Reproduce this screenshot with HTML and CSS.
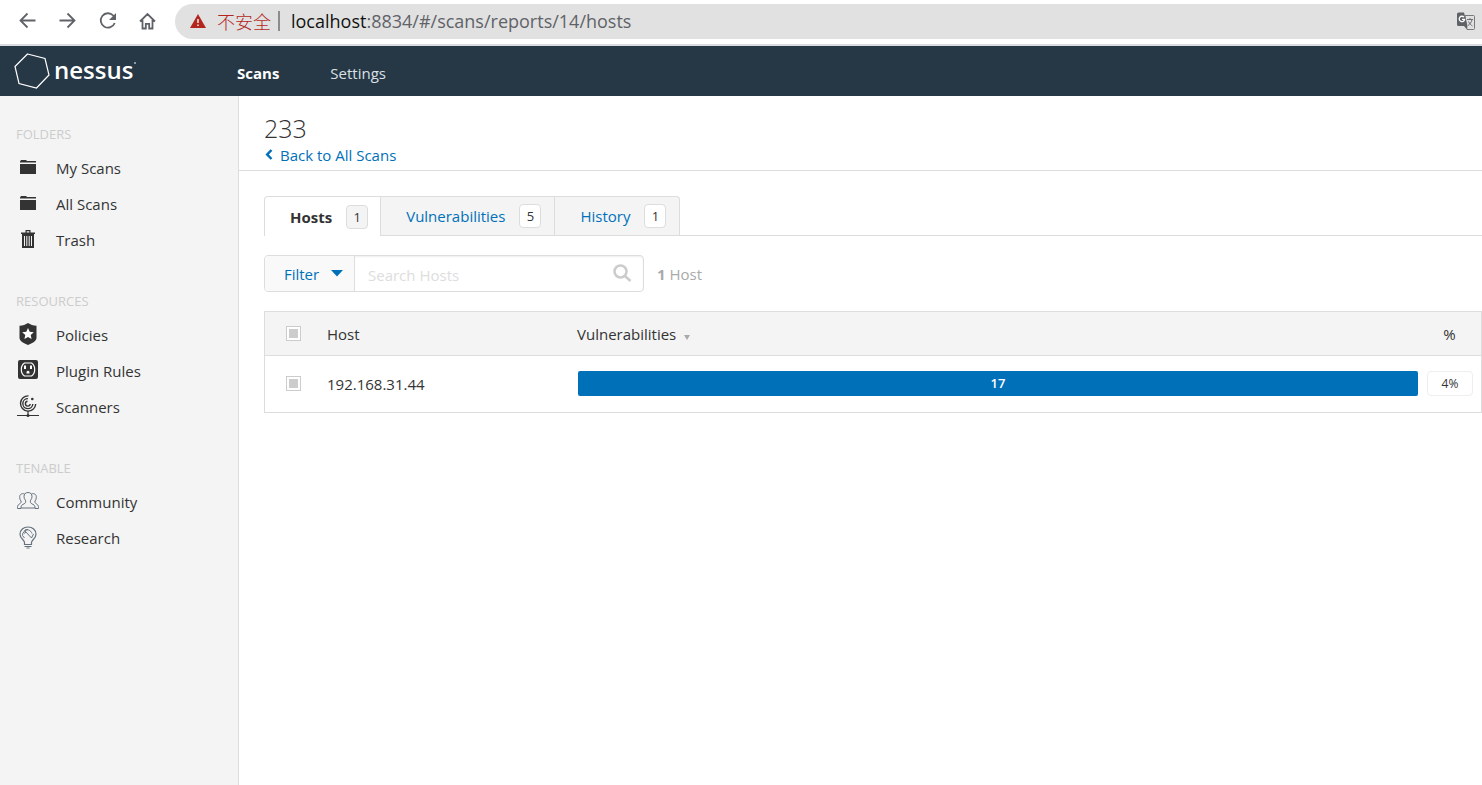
FILE: index.html
```html
<!DOCTYPE html>
<html lang="en">
<head>
<meta charset="utf-8">
<title>Nessus - Hosts</title>
<link rel="stylesheet" href="styles.css">
</head>
<body>
<div class="browser">
  <button class="browser-btn" aria-label="Back"><svg width="20" height="20" viewBox="0 0 20 20"><path d="M17.500 9.500h-15M9.500 2.500l-7 7 7 7"/></svg></button>
  <button class="browser-btn" aria-label="Forward"><svg width="20" height="20" viewBox="0 0 20 20"><path d="M1.500 9.500h15M9.500 2.500l7 7-7 7"/></svg></button>
  <button class="browser-btn" aria-label="Reload"><svg width="20" height="20" viewBox="0 0 20 20"><path d="M16.700 12a7.200 7.200 0 1 1-1.500-7.500L17 6.600"/><path class="solid" d="M18 2v7h-7z"/></svg></button>
  <button class="browser-btn" aria-label="Home"><svg width="20" height="20" viewBox="0 0 20 20"><path d="M2 10.500 9.500 3l7.500 7.500M4.500 9v8.500h3.300v-4.700h3.400v4.700h3.300V9"/></svg></button>
  <div class="address">
    <svg class="warn" width="16" height="14" viewBox="0 0 16 14"><path fill="#b3261e" d="M8 0 16 14H0z"/><path fill="#e1e1e1" d="M7.200 5h1.600v4H7.200zM7.200 10.400h1.600V12H7.200z"/></svg>
    <span class="insecure">不安全</span>
    <span class="divider"></span>
    <span class="url"><span class="url-host">localhost</span>:8834/#/scans/reports/14/hosts</span>
    <button class="translate" aria-label="Translate"><svg width="18" height="18" viewBox="0 0 18 18"><path fill="#e1e1e1" stroke="#77797c" d="M8 3.500h8.500a1 1 0 0 1 1 1v12a1 1 0 0 1-1 1H10z"/><path fill="#5f6368" d="M1.500.500H7L10.500 14h-9a1.500 1.500 0 0 1-1.500-1.500V2A1.500 1.500 0 0 1 1.500.500zM7 14h3.500L9.500 17z"/><path fill="none" stroke="#fff" stroke-width="1.300" d="M7 5.200A2.700 2.700 0 1 0 7.600 7.400H5"/><path fill="none" stroke="#6b6e72" d="M10 7.500h6M13 6v1.500M15 7.500c-.5 3-2 4.500-4 6M11.500 9.500c1 2.500 2.500 3.500 4 4.500"/></svg></button>
  </div>
</div>

<header class="topbar">
  <a class="brand" href="#/" aria-label="Nessus">
    <svg width="36" height="36" viewBox="0 0 36 36"><path fill="none" stroke="#fff" stroke-width="1.200" d="M13.500 1 31 5.500 35 22 22.500 35 5 30.500 1 13.500z"/></svg>
    <span class="brand-name">nessus</span><span class="brand-dot"></span>
  </a>
  <nav class="topnav">
    <a class="current" href="#/scans">Scans</a>
    <a href="#/settings">Settings</a>
  </nav>
</header>

<div class="layout">
  <aside class="sidebar">
    <section>
      <h2>FOLDERS</h2>
      <a href="#/scans/my"><svg width="22" height="24" viewBox="0 0 22 24"><path fill="#333" d="M3 6.500V5.400L4 4h5l1 1h9v1.500zM3 8h16v10H3z"/></svg>My Scans</a>
      <a href="#/scans/all"><svg width="22" height="24" viewBox="0 0 22 24"><path fill="#333" d="M3 6.500V5.400L4 4h5l1 1h9v1.500zM3 8h16v10H3z"/></svg>All Scans</a>
      <a href="#/scans/trash"><svg width="22" height="24" viewBox="0 0 22 24"><path fill="#333" fill-rule="evenodd" d="M8.500 2h5v2.500H18V6H4V4.500h4.500zM9.700 3.200v1.300h2.600V3.200zM5 6h12v14H5zM7 8v10h1V8zM9.300 8v10h1V8zM11.700 8v10h1V8zM14 8v10h1V8z"/></svg>Trash</a>
    </section>
    <section>
      <h2>RESOURCES</h2>
      <a href="#/policies"><svg width="22" height="24" viewBox="0 0 22 24"><path fill="#333" d="M11 0c2.500 1.700 5 2.500 8.500 2.800v12c0 3.500-4 5.500-8.500 7.200-4.500-1.700-8.500-3.700-8.500-7.200v-12C6 2.500 8.500 1.700 11 0z"/><path fill="#fff" d="m11 5 1.700 3.800 4.100.4-3.100 2.700.9 4.100-3.600-2.100L7.400 16l.9-4.100-3.100-2.700 4.100-.4z"/></svg>Policies</a>
      <a href="#/plugin-rules"><svg width="22" height="24" viewBox="0 0 22 24"><rect x="1" y="1" width="20" height="19" rx="2" fill="#333"/><path fill="none" stroke="#fff" stroke-width="1.200" d="M7.500 4h7c2 1.300 3.200 3.700 3.200 6.500s-1.200 5.200-3.200 6.500h-7c-2-1.300-3.200-3.700-3.200-6.500S5.500 5.300 7.500 4z"/><path fill="#fff" d="M7 6.500h2V10H7zM13 6.500h2V10h-2zM9.500 14.500v-1.300a1.500 1.500 0 0 1 3 0v1.300z"/></svg>Plugin Rules</a>
      <a href="#/scanners"><svg width="22" height="24" viewBox="0 0 22 24"><g fill="none" stroke="#333" stroke-width="1.400"><path d="M11.500.9A7.600 7.600 0 1 0 18.700 9"/><path d="M11 3.600A5 5 0 1 0 15.800 9"/><path d="M10.500 6.300A2.400 2.400 0 1 0 13.200 9"/><path stroke-width="1.200" d="M0 20.500h22M11 16v4"/></g><circle cx="15.300" cy="4" r="1.300" fill="#333"/><circle cx="11" cy="20.500" r="1.500" fill="#333"/></svg>Scanners</a>
    </section>
    <section>
      <h2>TENABLE</h2>
      <a href="#/community"><svg width="22" height="24" viewBox="0 0 22 24"><g fill="none" stroke="#64717c"><path d="M11 2.500c-2.500 0-4 1.500-4 4.200 0 1.500.6 2.600 1.400 3.500.5 1 .3 2.500-.6 3.200L5 15c-.8.600-1 1.500-1 3h14c0-1.500-.2-2.400-1-3l-2.800-1.600c-.9-.7-1.100-2.200-.6-3.200.8-.9 1.400-2 1.400-3.500 0-2.700-1.500-4.200-4-4.200z"/><path d="M7.500 3.900C4.500 3 2.500 4.500 2.700 7.500c0 1.500.6 2.600 1.300 3.500.3 1.500-.3 2.200-1.300 2.800L1.200 15C.5 15.700.5 16.800.5 18.500H4M14.500 3.900c3-.9 5 .6 4.800 3.600 0 1.500-.6 2.600-1.300 3.500-.3 1.500.3 2.200 1.300 2.800l1.500 1.200c.7.700.7 1.800.7 3.500H18"/></g></svg>Community</a>
      <a href="#/research"><svg width="22" height="24" viewBox="0 0 22 24"><g fill="none" stroke="#64717c"><path stroke-width="1.200" d="M7.500 18.500v-2C7.500 14 3 12.500 3 8.200 3 3.800 6.500 1 11 1s8 2.800 8 7.200c0 4.300-4.500 5.800-4.500 8.300v2z"/><path d="M7.500 20.500h7M9.500 22h3"/><path d="M5.500 9.500C5.500 6 8 4 11 3.500M7.500 4.500l7 7.500M8 4c3-1 6 .5 7 3.500M14.500 12l2-4M5.500 9.500l2 2.500M7 7.500l2-1.500"/></g></svg>Research</a>
    </section>
  </aside>

  <main class="main">
    <div class="page-head">
      <h1>233</h1>
      <a class="back" href="#/scans"><svg width="8" height="13" viewBox="0 0 8 13"><path d="M6.500 1 2.200 5.500l4.300 4.500"/></svg>Back to All Scans</a>
    </div>
    <nav class="tabs">
      <a class="tab active" href="#/hosts">Hosts <span class="count">1</span></a>
      <a class="tab" href="#/vulnerabilities">Vulnerabilities <span class="count">5</span></a>
      <a class="tab" href="#/history">History <span class="count">1</span></a>
    </nav>
    <div class="toolbar">
      <div class="search">
        <button class="filter">Filter <svg width="12" height="7" viewBox="0 0 12 7"><path fill="#0071b9" d="M0 0h12L6 6.500z"/></svg></button>
        <input type="text" placeholder="Search Hosts" aria-label="Search Hosts">
        <svg class="lens" width="20" height="20" viewBox="0 0 20 20"><circle cx="8.500" cy="7.500" r="6"/><path d="m13 12 5.500 5"/></svg>
      </div>
      <p class="total"><b>1</b> Host</p>
    </div>
    <table class="hosts">
      <thead>
        <tr><th class="c-check"><input type="checkbox" aria-label="Select all hosts"></th><th class="c-host">Host</th><th>Vulnerabilities <span class="sort"></span></th><th class="c-pct">%</th></tr>
      </thead>
      <tbody>
        <tr><td class="c-check"><input type="checkbox" aria-label="Select 192.168.31.44"></td><td>192.168.31.44</td><td class="c-bar"><div class="bar">17</div></td><td class="c-pct"><span class="pill">4%</span></td></tr>
      </tbody>
    </table>
  </main>
</div>
</body>
</html>
```

FILE: styles.css
```css
* { box-sizing: border-box; }
body {
  margin: 0;
  min-height: 100vh;
  display: flex;
  flex-direction: column;
  background: #fff;
  color: #333;
  font: 15px/20px "Open Sans", "Noto Sans", sans-serif;
}
a { color: inherit; text-decoration: none; }
button { padding: 0; border: 0; background: none; font: inherit; }
h1, h2, p { margin: 0; font-weight: 400; }
svg { flex: none; }

.browser {
  display: flex;
  align-items: center;
  height: 46px;
  padding: 0 0 2px 18px;
  gap: 20px;
  border-bottom: 2px solid #dadce0;
}
.browser-btn { display: flex; flex: none; }
.browser-btn svg { fill: none; stroke: #5f6368; stroke-width: 1.800; }
.browser-btn .solid { fill: #5f6368; stroke: none; }
.address {
  display: flex;
  flex: 1;
  align-items: center;
  height: 35px;
  margin-left: -3px;
  padding-left: 15px;
  border-radius: 18px 0 0 18px;
  background: #e1e1e1;
  font-size: 18px;
  color: #5f6368;
}
.insecure { margin-left: 11px; color: #b3261e; font-family: "Noto Sans CJK SC", sans-serif; font-weight: 300; }
.divider { width: 2px; height: 20px; margin: 0 11px 0 7px; background: #8c8c8c; }
.url { flex: 1; }
.url-host { color: #111; }
.translate { display: flex; margin-right: 7px; }

.topbar { display: flex; height: 50px; background: #263746; color: #fff; }
.brand { display: flex; align-items: center; width: 237px; padding-left: 14px; }
.brand-name { margin: 0 0 2px 4px; font-size: 24px; line-height: 30px; font-weight: 600; }
.brand-dot { width: 2px; height: 2px; margin: 0 0 16px 1px; background: #8d98a2; }
.topnav { display: flex; align-items: center; gap: 51px; padding-top: 3px; }
.topnav a { color: #dbe0e4; }
.topnav .current { color: #fff; font-weight: 700; }

.layout { display: flex; flex: 1; }
.sidebar {
  flex: none;
  width: 239px;
  padding: 28px 0 0 16px;
  border-right: 1px solid #ddd;
  background: #f4f4f4;
}
.sidebar section { margin-bottom: 33px; }
.sidebar h2 { margin-bottom: 6px; font-size: 13px; line-height: 20px; color: #ccc; }
.sidebar a { display: flex; align-items: center; gap: 17px; height: 36px; padding-left: 1px; }

.main { flex: 1; min-width: 0; }
.page-head { padding: 16px 25px 4px; border-bottom: 1px solid #ddd; }
.page-head h1 { font-size: 25px; line-height: 32px; font-weight: 300; }
.back { display: flex; align-items: center; gap: 7px; height: 22px; padding-left: 1px; color: #0071b9; }
.back svg { fill: none; stroke: #0071b9; stroke-width: 2.500; }

.tabs { display: flex; height: 40px; margin: 25px 0 0 25px; border-bottom: 1px solid #ddd; }
.tab {
  display: flex;
  align-items: center;
  gap: 14px;
  height: 39px;
  padding: 0 13px 0 25px;
  border: 1px solid #ddd;
  border-width: 1px 1px 0 0;
  background: #f4f4f4;
  color: #0071b9;
}
.tab.active { border-left-width: 1px; height: 40px; padding-right: 12px; border-radius: 4px 0 0 0; background: #fff; color: #333; font-weight: 700; }
.tab:last-child { border-radius: 0 4px 0 0; }
.count {
  width: 22px;
  border: 1px solid #ddd;
  border-radius: 4px;
  background: #fff;
  color: #333;
  font-size: 13px;
  line-height: 22px;
  font-weight: 400;
  text-align: center;
}
.active .count { background: #f4f4f4; }

.toolbar { display: flex; align-items: center; gap: 13px; margin: 19px 0 19px 25px; }
.search {
  display: flex;
  align-items: center;
  width: 380px;
  height: 37px;
  padding-right: 11px;
  border: 1px solid #ddd;
  border-radius: 4px;
  box-shadow: inset 0 1px 2px #eee;
}
.filter {
  display: flex;
  align-items: center;
  justify-content: center;
  gap: 12px;
  width: 90px;
  height: 100%;
  padding-left: 8px;
  border-right: 1px solid #ddd;
  border-radius: 3px 0 0 3px;
  background: #f9f9f9;
  color: #0071b9;
}
.search input { flex: 1; min-width: 0; padding: 2px 0 0 13px; border: 0; background: none; font: inherit; color: #333; }
.search input::placeholder { color: #ddd; opacity: 1; }
.lens { fill: none; stroke: #ccc; stroke-width: 2.500; }
.total { color: #aaa; }

.hosts { width: calc(100% - 25px); margin-left: 25px; border: 1px solid #ddd; border-collapse: separate; border-spacing: 0; table-layout: fixed; }
.hosts th, .hosts td { padding: 0; text-align: left; font-weight: 400; }
.hosts th { height: 44px; border-bottom: 1px solid #ddd; background: #f4f4f4; }
.hosts td { height: 56px; }
.hosts .c-check { width: 62px; padding-left: 21px; }
.hosts .c-host { width: 250px; }
.hosts .c-pct { width: 63px; text-align: center; }
.hosts .c-bar { padding-left: 1px; }
.hosts td.c-check, .hosts td.c-bar, .hosts td.c-pct { padding-bottom: 2px; }
.hosts input {
  display: block;
  width: 15px;
  height: 15px;
  margin: 0;
  padding: 2px;
  appearance: none;
  border: 1px solid #ccc;
  background: #ccc content-box;
  box-shadow: inset 0 0 0 2px #fff;
}
.sort { display: inline-block; margin-left: 4px; border: 3px solid transparent; border-top: 5px solid #aaa; border-bottom: 0; }
.bar { height: 25px; border-radius: 2px; background: #0071b9; color: #fff; font-size: 13px; line-height: 25px; font-weight: 600; text-align: center; }
.pill { display: block; width: 46px; margin-left: 9px; border: 1px solid #eee; border-radius: 4px; font-size: 12px; line-height: 23px; }
```
